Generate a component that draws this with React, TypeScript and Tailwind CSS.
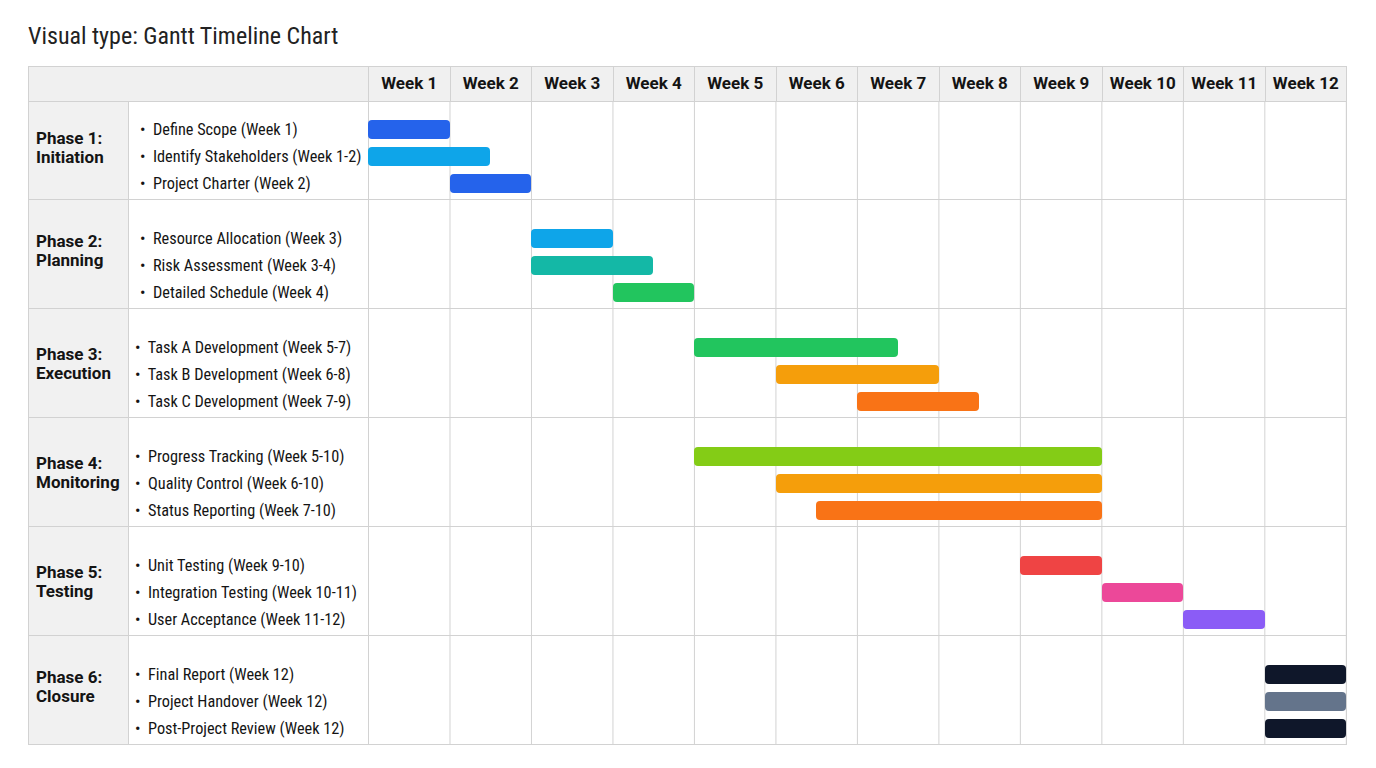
const weeks = ["Week 1", "Week 2", "Week 3", "Week 4", "Week 5", "Week 6", "Week 7", "Week 8", "Week 9", "Week 10", "Week 11", "Week 12"]

type Task = { name: string; bar: string }

const phases: { title: string; sub: string; height: string; indent: string; label: string; tasks: Task[] }[] = [
  {
    title: "Phase 1:",
    sub: "Initiation",
    height: "h-[98px]",
    indent: "pl-[11px]",
    label: "pb-[6px]",
    tasks: [
      { name: "Define Scope (Week 1)", bar: "col-start-1 col-span-2 bg-[#2563eb]" },
      { name: "Identify Stakeholders (Week 1-2)", bar: "col-start-1 col-span-3 bg-[#0ea5e9]" },
      { name: "Project Charter (Week 2)", bar: "col-start-3 col-span-2 bg-[#2563eb]" },
    ],
  },
  {
    title: "Phase 2:",
    sub: "Planning",
    height: "h-[109px]",
    indent: "pl-[11px]",
    label: "pb-[6px]",
    tasks: [
      { name: "Resource Allocation (Week 3)", bar: "col-start-5 col-span-2 bg-[#0ea5e9]" },
      { name: "Risk Assessment (Week 3-4)", bar: "col-start-5 col-span-3 bg-[#14b8a6]" },
      { name: "Detailed Schedule (Week 4)", bar: "col-start-7 col-span-2 bg-[#22c55e]" },
    ],
  },
  {
    title: "Phase 3:",
    sub: "Execution",
    height: "h-[109px]",
    indent: "pl-[6px]",
    label: "pt-[1px]",
    tasks: [
      { name: "Task A Development (Week 5-7)", bar: "col-start-9 col-span-5 bg-[#22c55e]" },
      { name: "Task B Development (Week 6-8)", bar: "col-start-11 col-span-4 bg-[#f59e0b]" },
      { name: "Task C Development (Week 7-9)", bar: "col-start-13 col-span-3 bg-[#f97316]" },
    ],
  },
  {
    title: "Phase 4:",
    sub: "Monitoring",
    height: "h-[109px]",
    indent: "pl-[6px]",
    label: "pt-[1px]",
    tasks: [
      { name: "Progress Tracking (Week 5-10)", bar: "col-start-9 col-span-10 bg-[#84cc16]" },
      { name: "Quality Control (Week 6-10)", bar: "col-start-11 col-span-8 bg-[#f59e0b]" },
      { name: "Status Reporting (Week 7-10)", bar: "col-start-12 col-span-7 bg-[#f97316]" },
    ],
  },
  {
    title: "Phase 5:",
    sub: "Testing",
    height: "h-[109px]",
    indent: "pl-[6px]",
    label: "pt-[2px]",
    tasks: [
      { name: "Unit Testing (Week 9-10)", bar: "col-start-17 col-span-2 bg-[#ef4444]" },
      { name: "Integration Testing (Week 10-11)", bar: "col-start-19 col-span-2 bg-[#ec4899]" },
      { name: "User Acceptance (Week 11-12)", bar: "col-start-21 col-span-2 bg-[#8b5cf6]" },
    ],
  },
  {
    title: "Phase 6:",
    sub: "Closure",
    height: "h-[109px]",
    indent: "pl-[6px]",
    label: "pb-[6px]",
    tasks: [
      { name: "Final Report (Week 12)", bar: "col-start-23 col-span-2 bg-[#0f172a]" },
      { name: "Project Handover (Week 12)", bar: "col-start-23 col-span-2 bg-[#64748b]" },
      { name: "Post-Project Review (Week 12)", bar: "col-start-23 col-span-2 bg-[#0f172a]" },
    ],
  },
]

export default function App() {
  return (
    <div className="min-h-screen w-[1376px] bg-white font-[Roboto,sans-serif] text-[#141414]">
      <h1 className="pl-[28px] pt-[21px] text-[24px] leading-[30px] text-[#222] font-stretch-semi-condensed">
        Visual type: Gantt Timeline Chart
      </h1>

      <div className="ml-[28px] mt-[15px] w-[1319px] border border-[#d2d2d2]">
        {/* header */}
        <div className="flex h-[34px] bg-[#f0f0f0]">
          <div className="w-[339px]" />
          {weeks.map((w) => (
            <div key={w} className="flex flex-1 items-center justify-center border-l border-[#d2d2d2] text-[17px] font-bold">
              {w}
            </div>
          ))}
        </div>

        {phases.map((p) => (
          <div key={p.title} className={`flex border-t border-[#d2d2d2] ${p.height}`}>
            <div className={`flex w-[99px] flex-col justify-center bg-[#f1f1f1] pl-[7px] text-[17px] font-bold leading-[19px] ${p.label}`}>
              <span>{p.title}</span>
              <span>{p.sub}</span>
            </div>
            <div className={`flex w-[240px] flex-col justify-end border-l border-[#d2d2d2] pb-[2px] text-[16.3px] font-stretch-condensed ${p.indent}`}>
              {p.tasks.map((t) => (
                <div key={t.name} className="h-[27px] leading-[27px] whitespace-nowrap">
                  •&nbsp; {t.name}
                </div>
              ))}
            </div>
            <div className="flex flex-1 flex-col justify-end bg-[linear-gradient(to_right,#d2d2d2_1px,transparent_1px)] bg-[length:calc(100%/12)_100%] pb-[2px]">
              {p.tasks.map((t) => (
                <div key={t.name} className="grid h-[27px] grid-cols-24 items-center">
                  <div className={`h-[19px] rounded-[4px] ${t.bar}`} />
                </div>
              ))}
            </div>
          </div>
        ))}
      </div>
    </div>
  )
}
